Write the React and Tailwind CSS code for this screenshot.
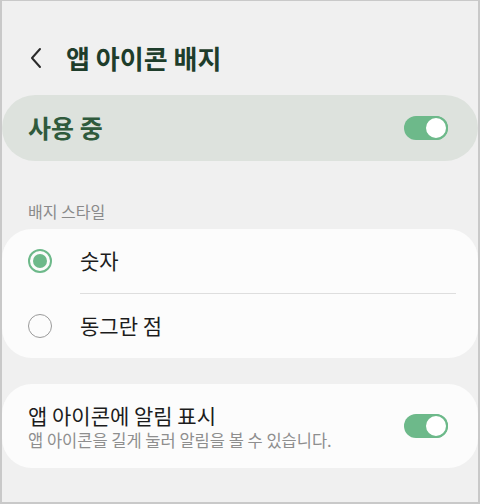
function Toggle() {
  return (
    <div className="relative w-[44px] h-[24px] rounded-full bg-[#6db98a]">
      <div className="absolute right-0 top-0 w-[24px] h-[24px] rounded-full bg-white border-2 border-[#6db98a]" />
    </div>
  );
}

function Radio({ checked }) {
  return checked ? (
    <div className="w-[24px] h-[24px] rounded-full border-2 border-[#6db98a] flex items-center justify-center">
      <div className="w-[14px] h-[14px] rounded-full bg-[#6db98a]" />
    </div>
  ) : (
    <div className="w-[24px] h-[24px] rounded-full border-[1.5px] border-[#9a9a9a]" />
  );
}

export default function App() {
  return (
    <div
      className="w-[480px] h-[504px] bg-[#f0f0f0] border-l-2 border-t border-r-2 border-b-2 border-[#c9c9c9] overflow-hidden"
      style={{ fontFamily: '"Noto Sans CJK KR", "Noto Sans", sans-serif' }}
    >
      <div className="flex items-center h-[58px] mt-[28px] pl-[26px]">
        <svg width="16" height="24" viewBox="0 0 16 24" className="mr-[22px]">
          <path d="M12 3 L4 12 L12 21" fill="none" stroke="#2a2a2a" strokeWidth="2" strokeLinecap="round" strokeLinejoin="round" />
        </svg>
        <h1 className="text-[26px] font-bold text-[#1e3d2b] leading-none">앱 아이콘 배지</h1>
      </div>

      <div className="mt-[8px] h-[66px] rounded-full bg-[#dde2dd] flex items-center justify-between pl-[26px] pr-[30px]">
        <span className="text-[25px] font-bold text-[#2f5a3c]">사용 중</span>
        <Toggle />
      </div>

      <div className="pl-[26px] mt-[42px] text-[16px] text-[#8a8a8a] leading-none">배지 스타일</div>

      <div className="mt-[10px] bg-[#fcfcfc] rounded-[30px]">
        <div className="flex items-center h-[64px] pl-[26px]">
          <Radio checked />
          <span className="ml-[28px] text-[21px] text-[#1c1c1c]">숫자</span>
        </div>
        <div className="ml-[78px] mr-[22px] h-px bg-[#dedede]" />
        <div className="flex items-center h-[64px] pl-[26px]">
          <Radio />
          <span className="ml-[28px] text-[21px] text-[#1c1c1c]">동그란 점</span>
        </div>
      </div>

      <div className="mt-[26px] bg-[#fcfcfc] rounded-[30px] h-[84px] flex items-center justify-between pl-[26px] pr-[30px]">
        <div className="flex flex-col">
          <span className="text-[21px] text-[#1c1c1c] leading-[28px]">앱 아이콘에 알림 표시</span>
          <span className="text-[16.5px] text-[#8e8e8e] leading-[22px]">앱 아이콘을 길게 눌러 알림을 볼 수 있습니다.</span>
        </div>
        <Toggle />
      </div>
    </div>
  );
}
